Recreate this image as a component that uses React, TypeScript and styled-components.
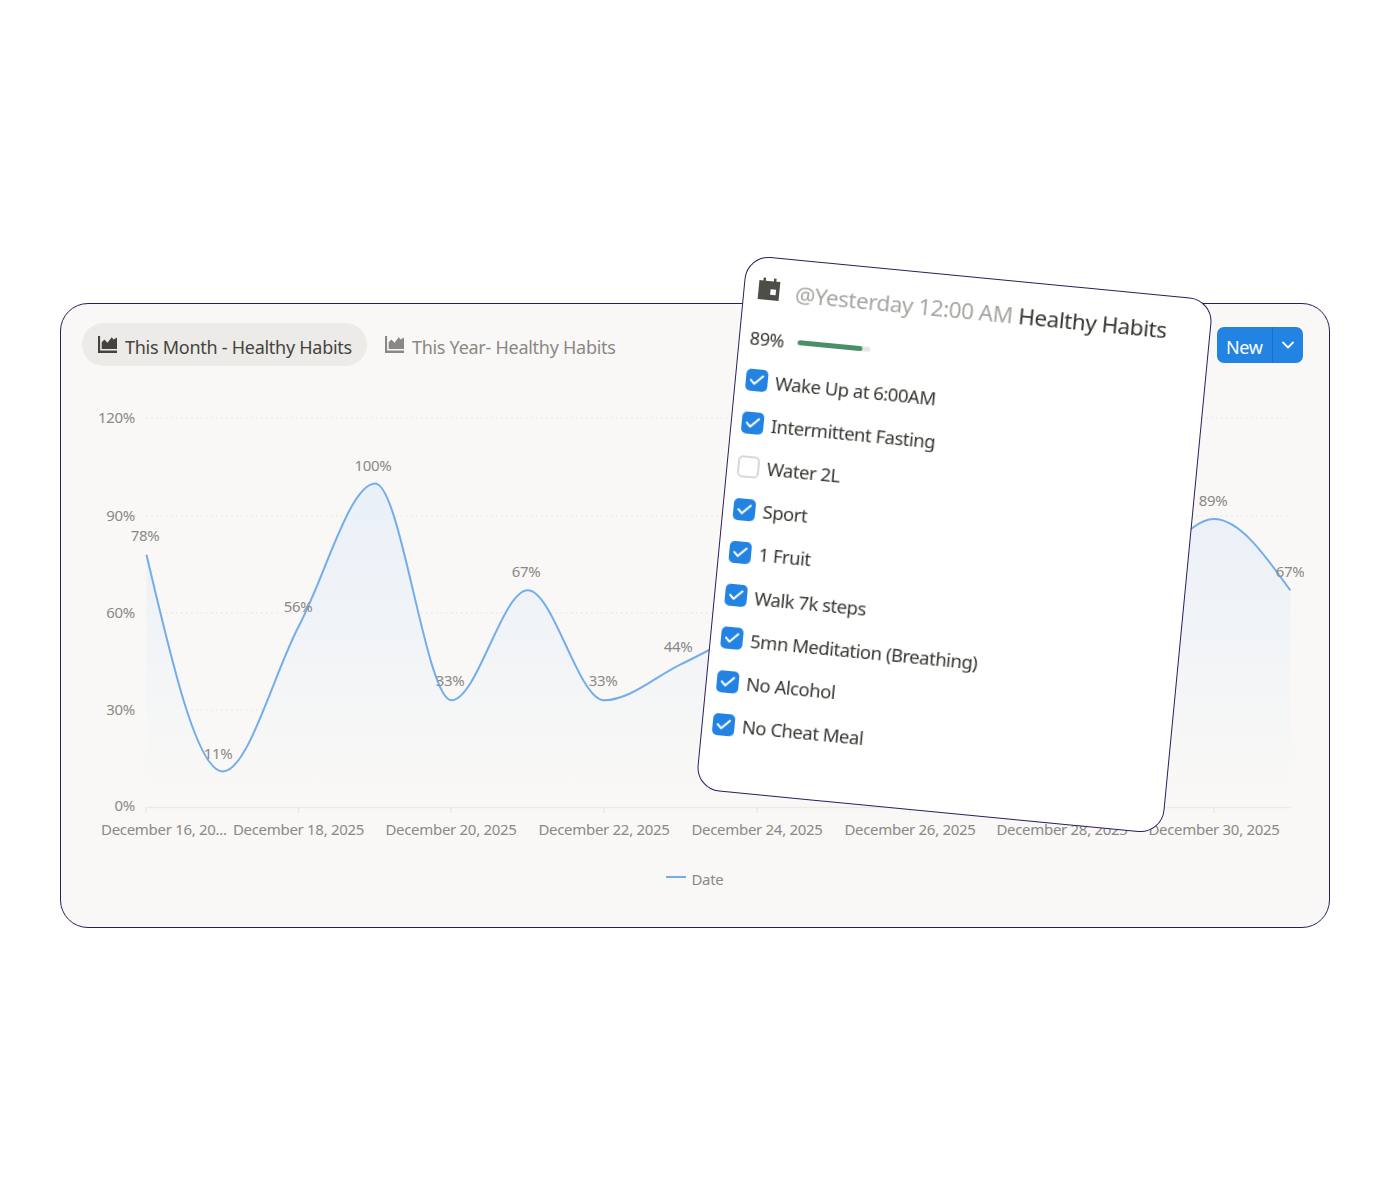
import React from 'react';
import styled, { createGlobalStyle } from 'styled-components';
import { Check, ChevronDown } from 'lucide-react';

const GlobalStyle = createGlobalStyle`
  html, body { margin: 0; background: #ffffff; }
  body { font-family: "Noto Sans", "Open Sans", sans-serif; color: #37352f; }
  #root { padding: 303px 0 0 60px; height: 883px; }
`;

const Card = styled.section`
  position: relative;
  box-sizing: border-box;
  width: 1270px;
  height: 625px;
  background: #f9f8f6;
  border: 1px solid #2c1c5c;
  border-radius: 28px;
  filter: blur(0.3px);
`;

const Toolbar = styled.header`
  display: flex;
  align-items: center;
  justify-content: space-between;
  height: 43px;
  padding: 19px 26px 0 21px;
`;

const Tabs = styled.nav`
  display: flex;
  align-items: center;
  gap: 2px;
`;

const Tab = styled.div<{ $active?: boolean }>`
  display: flex;
  align-items: center;
  gap: 8px;
  height: 43px;
  padding: 0 15px 0 16px;
  border-radius: 22px;
  font-size: 18px;
  letter-spacing: -0.27px;
  white-space: nowrap;
  background: ${(p) => (p.$active ? '#ecebe8' : 'transparent')};
  color: ${(p) => (p.$active ? '#45433e' : '#8a8884')};
`;

const TabLabel = styled.span`
  margin-top: 4px;
`;

const NewButton = styled.div`
  display: flex;
  height: 36px;
  margin-top: 1px;
  border-radius: 7px;
  overflow: hidden;
  background: #2383e2;
  color: #ffffff;
  font-size: 18px;
  letter-spacing: -0.4px;
`;

const NewLabel = styled.span`
  display: flex;
  align-items: center;
  width: 56px;
  padding: 3px 0 0 9px;
  box-sizing: border-box;
  border-right: 1px solid #1b6fc4;
`;

const NewCaret = styled.span`
  display: flex;
  align-items: center;
  justify-content: center;
  width: 30px;
`;

const ChartSvg = styled.svg`
  display: block;
  margin: 19px 25px 0 20px;
`;

const GridLine = styled.line`
  stroke: #e9e8e5;
  stroke-width: 1.5;
  stroke-dasharray: 1.5 3.5;
`;

const AxisLine = styled.line`
  stroke: #ebeae7;
  stroke-width: 1.5;
`;

const Curve = styled.path`
  fill: none;
  stroke: #74aee8;
  stroke-width: 2;
`;

const AxisText = styled.text`
  font-size: 15px;
  letter-spacing: -0.3px;
  fill: #8b8986;
  dominant-baseline: central;
`;

const Legend = styled.div`
  display: flex;
  align-items: center;
  justify-content: center;
  gap: 5px;
  margin-top: 7px;
  font-size: 15px;
  letter-spacing: -0.3px;
  color: #8b8986;
`;

const LegendSwatch = styled.span`
  width: 20px;
  height: 2px;
  margin-top: -5px;
  background: #74aee8;
`;

const Popover = styled.aside`
  position: absolute;
  left: 658.5px;
  top: -28.5px;
  box-sizing: border-box;
  width: 469px;
  height: 537px;
  padding: 16px 10px 0;
  background: #ffffff;
  border: 1px solid #2c1c5c;
  border-radius: 24px;
  transform: rotate(5.5deg);
`;

const PopoverHeader = styled.div`
  display: flex;
  align-items: center;
  height: 30px;
  padding-left: 3px;
  gap: 15px;
  font-size: 22.5px;
  letter-spacing: -0.45px;
  white-space: nowrap;
`;

const HeaderTitle = styled.span`
  margin-top: 4px;
`;

const Mention = styled.span`
  color: #a7a5a1;
  margin-right: 6px;
`;

const ProgressRow = styled.div`
  display: flex;
  align-items: center;
  gap: 14px;
  height: 20px;
  margin-top: 25px;
  font-size: 18px;
  letter-spacing: -0.4px;
`;

const ProgressTrack = styled.div`
  width: 73px;
  height: 5px;
  border-radius: 3px;
  background: #e6e6e3;
`;

const ProgressFill = styled.div`
  height: 100%;
  border-radius: 3px;
  background: #4a8f68;
`;

const TaskList = styled.ul`
  list-style: none;
  margin: 10.6px 0 0;
  padding: 0;
`;

const Task = styled.li`
  display: flex;
  align-items: center;
  gap: 7.5px;
  height: 43.2px;
  font-size: 18.5px;
  letter-spacing: -0.47px;
  white-space: nowrap;
`;

const Checkbox = styled.span<{ $checked: boolean }>`
  display: flex;
  align-items: center;
  justify-content: center;
  box-sizing: border-box;
  width: 22px;
  height: 22px;
  border-radius: 5px;
  color: #ffffff;
  background: ${(p) => (p.$checked ? '#2383e2' : '#ffffff')};
  border: ${(p) => (p.$checked ? 'none' : '2px solid #d9d8d5')};
`;

const X_START = 146.5;
const DAY = 76.25;
const yFor = (v: number) => 807 - 3.235 * v;

// the values from December 24 to 29 sit behind the popover
const values = [78, 11, 56, 100, 33, 67, 33, 44, 56, 67, 78, 67, 67, 72, 89, 67];
const points = values.map((v, i) => [X_START + i * DAY, yFor(v)] as const);

function monotonePath(pts: readonly (readonly [number, number])[]) {
  const slopes = pts.map((_, i) => {
    if (i === 0 || i === pts.length - 1) return 0;
    const s0 = (pts[i][1] - pts[i - 1][1]) / DAY;
    const s1 = (pts[i + 1][1] - pts[i][1]) / DAY;
    return (Math.sign(s0) + Math.sign(s1)) * Math.min(Math.abs(s0), Math.abs(s1), 0.25 * Math.abs(s0 + s1));
  });
  const last = pts.length - 1;
  slopes[0] = (3 * (pts[1][1] - pts[0][1]) / DAY - slopes[1]) / 2;
  slopes[last] = (3 * (pts[last][1] - pts[last - 1][1]) / DAY - slopes[last - 1]) / 2;
  let d = `M${pts[0][0]},${pts[0][1]}`;
  for (let i = 1; i < pts.length; i++) {
    const t = DAY / 3;
    d += `C${pts[i - 1][0] + t},${pts[i - 1][1] + t * slopes[i - 1]} ${pts[i][0] - t},${pts[i][1] - t * slopes[i]} ${pts[i][0]},${pts[i][1]}`;
  }
  return d;
}

const linePath = monotonePath(points);
const areaPath = `${linePath}L${points[points.length - 1][0]},786L${X_START},786Z`;

const yTicks = [
  { label: '120%', y: 418 },
  { label: '90%', y: 516 },
  { label: '60%', y: 613 },
  { label: '30%', y: 710 },
];

const xTicks = [
  { label: 'December 18, 2025', x: 298.5 },
  { label: 'December 20, 2025', x: 451 },
  { label: 'December 22, 2025', x: 604 },
  { label: 'December 24, 2025', x: 757 },
  { label: 'December 26, 2025', x: 910 },
  { label: 'December 28, 2025', x: 1062 },
  { label: 'December 30, 2025', x: 1214 },
];

const pointLabels = [
  { label: '78%', x: 145, y: 535 },
  { label: '11%', x: 218, y: 753 },
  { label: '56%', x: 298, y: 606 },
  { label: '100%', x: 373, y: 465 },
  { label: '33%', x: 450, y: 680 },
  { label: '67%', x: 526, y: 571 },
  { label: '33%', x: 603, y: 680 },
  { label: '44%', x: 678, y: 646 },
  { label: '89%', x: 1213, y: 500 },
  { label: '67%', x: 1290, y: 571 },
];

const tasks = [
  { label: 'Wake Up at 6:00AM', done: true },
  { label: 'Intermittent Fasting', done: true },
  { label: 'Water 2L', done: false },
  { label: 'Sport', done: true },
  { label: '1 Fruit', done: true },
  { label: 'Walk 7k steps', done: true },
  { label: '5mn Meditation (Breathing)', done: true },
  { label: 'No Alcohol', done: true },
  { label: 'No Cheat Meal', done: true },
];

function AreaChartIcon() {
  return (
    <svg width="19" height="18" viewBox="0 0 18 18" fill="currentColor" preserveAspectRatio="none">
      <path d="M0 0h2v14.5h16V17H0z" />
      <path d="M3.5 13V6.2L6 3.5l3 3.2 4-5.4 1.8 2.2L18 1.5V13z" />
    </svg>
  );
}

function CalendarIcon() {
  return (
    <svg width="23" height="24" viewBox="0 0 23 24" fill="#4f4d48">
      <path d="M5 1h2.5v3h8V1H18v3h4v19H1V4h4z" />
      <rect x="13" y="12" width="5.5" height="5.5" fill="#ffffff" />
    </svg>
  );
}

export default function App() {
  return (
    <>
      <GlobalStyle />
      <Card>
        <Toolbar>
          <Tabs>
            <Tab $active>
              <AreaChartIcon />
              <TabLabel>This Month - Healthy Habits</TabLabel>
            </Tab>
            <Tab>
              <AreaChartIcon />
              <TabLabel>This Year- Healthy Habits</TabLabel>
            </Tab>
          </Tabs>
          <NewButton>
            <NewLabel>New</NewLabel>
            <NewCaret>
              <ChevronDown size={20} strokeWidth={2.2} />
            </NewCaret>
          </NewButton>
        </Toolbar>

        <ChartSvg width={1223} height={477} viewBox="81 385 1223 477">
          <defs>
            <linearGradient id="areaFill" x1="0" y1="0" x2="0" y2="1">
              <stop offset="0" stopColor="#e9f0f8" />
              <stop offset="1" stopColor="#f9f8f6" />
            </linearGradient>
          </defs>
          {yTicks.map((t) => (
            <GridLine key={t.label} x1={146} x2={1291} y1={t.y} y2={t.y} />
          ))}
          <path d={areaPath} fill="url(#areaFill)" />
          <Curve d={linePath} />
          <AxisLine x1={145} x2={1291} y1={807.5} y2={807.5} />
          {[146, ...xTicks.map((t) => t.x)].map((x) => (
            <AxisLine key={x} x1={x} x2={x} y1={807} y2={813} />
          ))}
          {yTicks.map((t) => (
            <AxisText key={t.label} x={135} y={t.y - 1} textAnchor="end">
              {t.label}
            </AxisText>
          ))}
          <AxisText x={135} y={805} textAnchor="end">
            0%
          </AxisText>
          <AxisText x={101} y={829}>
            December 16, 20...
          </AxisText>
          {xTicks.map((t) => (
            <AxisText key={t.label} x={t.x} y={829} textAnchor="middle">
              {t.label}
            </AxisText>
          ))}
          {pointLabels.map((p) => (
            <AxisText key={p.x} x={p.x} y={p.y} textAnchor="middle">
              {p.label}
            </AxisText>
          ))}
        </ChartSvg>

        <Legend>
          <LegendSwatch />
          Date
        </Legend>

        <Popover>
          <PopoverHeader>
            <CalendarIcon />
            <HeaderTitle>
              <Mention>@Yesterday 12:00 AM</Mention>
              Healthy Habits
            </HeaderTitle>
          </PopoverHeader>
          <ProgressRow>
            89%
            <ProgressTrack>
              <ProgressFill style={{ width: '89%' }} />
            </ProgressTrack>
          </ProgressRow>
          <TaskList>
            {tasks.map((task) => (
              <Task key={task.label}>
                <Checkbox $checked={task.done}>
                  {task.done && <Check size={18} strokeWidth={2.6} />}
                </Checkbox>
                {task.label}
              </Task>
            ))}
          </TaskList>
        </Popover>
      </Card>
    </>
  );
}
